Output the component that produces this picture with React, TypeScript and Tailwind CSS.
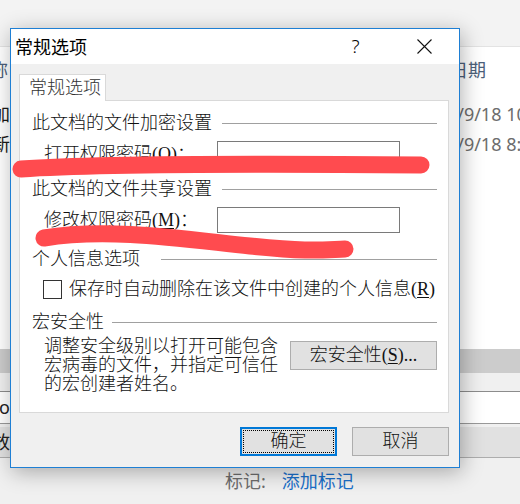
import React from "react";

const song = "font-['Liberation_Serif','Noto_Sans_CJK_SC',serif]";
const ui = "font-['Noto_Sans','Noto_Sans_CJK_SC',sans-serif]";

function GroupHeader({ title, gap }: { title: string; gap: string }) {
  return (
    <div className="flex items-center h-[20px] pl-[12px]">
      <span className="leading-[20px] whitespace-nowrap">{title}</span>
      <div className={`flex-1 h-px bg-[#a0a0a0] ${gap}`} />
    </div>
  );
}

function PasswordRow({ label, hotkey }: { label: string; hotkey: string }) {
  return (
    <div className="flex items-center h-[26px] pl-[24px]">
      <span className="w-[173px] shrink-0 leading-[20px] whitespace-nowrap">
        {label}(<u className="underline-offset-2">{hotkey}</u>)：
      </span>
      <div className="w-[183px] h-[26px] border border-[#7a7a7a] bg-white" />
    </div>
  );
}

export default function App() {
  return (
    <div className={`relative w-[520px] h-[504px] overflow-hidden bg-white flex flex-col ${ui}`}>
      {/* explorer window behind */}
      <div className="h-[47px] shrink-0 bg-[#f3f3f3] border-b border-[#e3e3e3]" />
      <div className="h-[302px] shrink-0 bg-white text-[18px]">
        <div className="flex items-center h-[46px] text-[#4c607a]">
          <div className="w-[414px] shrink-0">
            <span className="ml-[-28px]">名称</span>
          </div>
          <span>修改日期</span>
        </div>
        <div className="flex items-center h-[30px] mt-[6px]">
          <div className="w-[416px] shrink-0 text-[#1a1a1a]">
            <span className="ml-[-8px]">加</span>
          </div>
          <span className="text-[#6d6d6d] whitespace-nowrap">2019/9/18 10:25</span>
        </div>
        <div className="flex items-center h-[31px]">
          <div className="w-[416px] shrink-0 text-[#1a1a1a]">
            <span className="ml-[-8px]">新</span>
          </div>
          <span className="text-[#6d6d6d] whitespace-nowrap">2019/9/18 8:40</span>
        </div>
      </div>
      <div className="h-[24px] shrink-0 bg-[#cccccc]" />
      <div className="h-[19px] shrink-0 bg-[#f0f0f0] border-b border-[#8c8c8c]" />
      <div className="h-[32px] shrink-0 bg-white border-b border-[#999999] flex items-center text-[18px] text-[#222]">
        <span className="ml-[-1px]">ot</span>
      </div>
      <div className="h-[3px] shrink-0 bg-[#f0f0f0]" />
      <div className="h-[31px] shrink-0 bg-[#e1e1e1] border-b border-[#adadad] flex items-center text-[18px] text-[#222]">
        <span className="ml-[-8px]">放</span>
      </div>
      <div className="flex-1 bg-[#f0f0f0] flex items-center text-[18px]">
        <span className="ml-[225px] text-[#6d6d6d]">标记:</span>
        <span className="ml-[16px] text-[#1a6fc9]">添加标记</span>
      </div>

      {/* dialog */}
      <div className="absolute left-[10px] top-[28px] w-[450px] h-[440px] border border-[#1e7fd4] bg-[#f0f0f0] flex flex-col shadow-[2px_4px_20px_rgba(0,0,0,0.3)]">
        <div className="h-[35px] shrink-0 bg-white flex items-center">
          <span className="pl-[4px] text-[18px] text-black leading-[20px]">常规选项</span>
          <div className="flex-1" />
          <div className="w-[69px] h-full flex items-center justify-center text-[19px] font-light text-black">?</div>
          <div className="w-[69px] h-full flex items-center justify-center">
            <svg width="15" height="15" viewBox="0 0 15 15">
              <path d="M0.5 0.5 L14.5 14.5 M14.5 0.5 L0.5 14.5" stroke="#111" strokeWidth="1.1" fill="none" />
            </svg>
          </div>
        </div>

        <div className={`flex-1 pt-[10px] pl-[8px] text-[18px] font-light text-[#111] ${song}`}>
          <div className="relative z-10 w-[87px] h-[27px] -mb-px bg-white border border-b-0 border-[#d9d9d9] pl-[9px] flex items-center text-[#333]">
            常规选项
          </div>
          <div className="w-[430px] h-[313px] bg-white border border-[#d9d9d9] pt-[12px] pr-[11px] flex flex-col">
            <GroupHeader title="此文档的文件加密设置" gap="ml-[10px]" />
            <div className="mt-[8px]">
              <PasswordRow label="打开权限密码" hotkey="O" />
            </div>
            <div className="mt-[12px]">
              <GroupHeader title="此文档的文件共享设置" gap="ml-[10px]" />
            </div>
            <div className="mt-[8px]">
              <PasswordRow label="修改权限密码" hotkey="M" />
            </div>
            <div className="mt-[16px]">
              <GroupHeader title="个人信息选项" gap="ml-[21px]" />
            </div>
            <div className="mt-[10px] flex items-center h-[20px] pl-[23px]">
              <div className="w-[19px] h-[19px] border border-[#333] bg-white shrink-0" />
              <span className="ml-[7px] whitespace-nowrap leading-[20px]">
                保存时自动删除在该文件中创建的个人信息(<u className="underline-offset-2">R</u>)
              </span>
            </div>
            <div className="mt-[13px]">
              <GroupHeader title="宏安全性" gap="ml-[8px]" />
            </div>
            <div className="mt-[5px] flex items-start pl-[24px]">
              <div className="leading-[19px] whitespace-nowrap">
                调整安全级别以打开可能包含
                <br />
                宏病毒的文件，并指定可信任
                <br />
                的宏创建者姓名。
              </div>
              <div className="flex-1" />
              <button className="mt-[4px] w-[147px] h-[29px] bg-[#e1e1e1] border border-[#adadad] flex items-center justify-center whitespace-nowrap">
                宏安全性(<u className="underline-offset-2">S</u>)...
              </button>
            </div>
          </div>
          <div className="mt-[14px] flex justify-end gap-[15px] pr-[10px]">
            <button className="relative w-[97px] h-[29px] bg-[#e1e1e1] border-2 border-[#0078d7] flex items-center justify-center">
              <div className="absolute inset-[1px] border border-dotted border-black" />
              确定
            </button>
            <button className="w-[97px] h-[29px] bg-[#e1e1e1] border border-[#adadad] flex items-center justify-center">
              取消
            </button>
          </div>
        </div>
      </div>

      {/* red annotation strokes */}
      <svg className="absolute left-0 top-0 pointer-events-none" width="520" height="504" viewBox="0 0 520 504">
        <path d="M21 169 C 110 163, 300 164, 421 165" stroke="#ff4b4f" strokeWidth="17" strokeLinecap="round" fill="none" />
        <path d="M44 238 C 110 227, 190 240, 250 246 S 320 250, 345 249" stroke="#ff4b4f" strokeWidth="17" strokeLinecap="round" fill="none" />
      </svg>
    </div>
  );
}
